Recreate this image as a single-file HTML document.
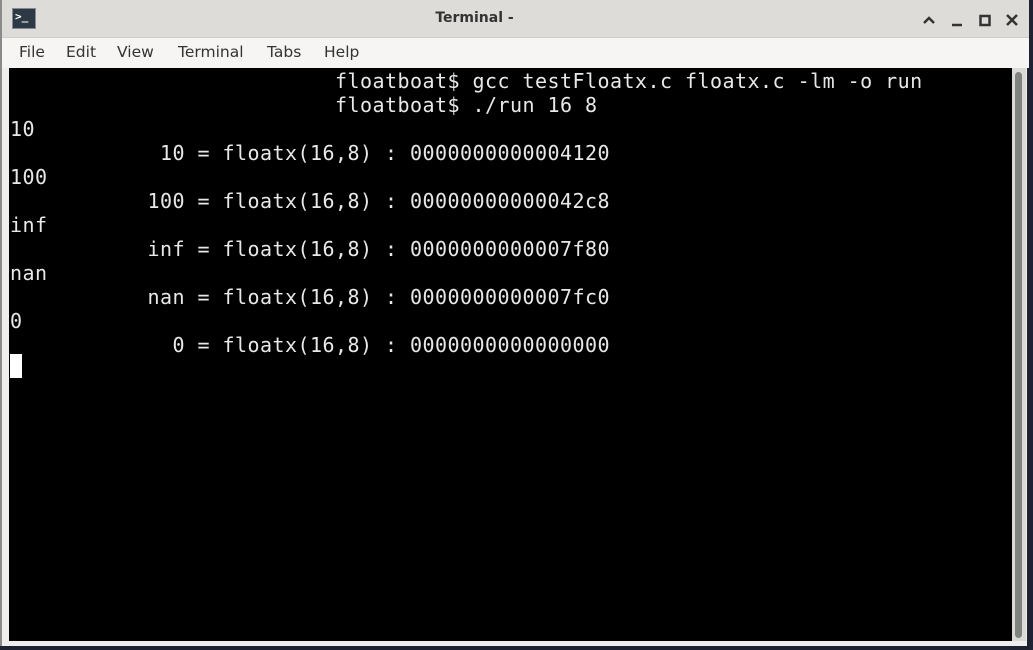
<!DOCTYPE html>
<html><head><style>
body{margin:0;width:1033px;height:650px;background:#1e2233;position:relative;overflow:hidden;font-family:"DejaVu Sans","Liberation Sans",sans-serif}
.win{position:absolute;left:0;top:0;width:1027px;height:646px;background:#efeeec;border-left:2px solid #8a8a8a;box-sizing:border-box}
.title{position:absolute;left:0;top:0;width:1027px;height:37px;background:#dedcd8;border-bottom:1px solid #cfcdc9}
.title .t{position:absolute;left:0;width:945px;top:10px;text-align:center;font-size:14px;font-weight:bold;color:#333}
.icon{position:absolute;left:10px;top:8px;width:24px;height:21px;background:#2d3a45;border:1px solid #889;box-sizing:border-box;color:#fff;font:bold 11px "DejaVu Sans Mono",monospace;line-height:16px;padding-left:2px}
.menu{position:absolute;left:0;top:38px;width:1027px;height:30px;background:#f6f5f4}
.menu span{position:absolute;top:5px;font-size:15.5px;color:#333}
.term{position:absolute;left:9px;top:68px;width:1003px;height:573px;background:#000}
.sb{position:absolute;left:1012px;top:68px;width:14px;height:573px;background:#dcdad6}
.thumb{position:absolute;left:3px;top:4px;width:7px;height:566px;background:#7f8480;border-radius:4px}
pre{position:absolute;left:10px;top:69px;margin:0;font:20px "DejaVu Sans Mono",monospace;letter-spacing:0.46px;line-height:24px;color:#e8e8e8}
.cur{position:absolute;left:10px;top:354px;width:12px;height:24px;background:#fff}
</style></head><body>
<div class="win">
<div class="title"><div class="icon">&gt;_</div><div class="t">Terminal -</div>
<svg style="position:absolute;left:920px;top:12px" width="100" height="16">
<path d="M2 11 L7 6 L12 11" stroke="#333" stroke-width="2.5" fill="none"/>
<path d="M30 13 H40" stroke="#333" stroke-width="2.5"/>
<rect x="58.5" y="4" width="9" height="9" stroke="#333" stroke-width="2.5" fill="none"/>
<path d="M85 3 L95 13 M95 3 L85 13" stroke="#333" stroke-width="2.5"/>
</svg></div>
<div class="menu"><span style="left:17px">File</span><span style="left:64px">Edit</span><span style="left:115px">View</span><span style="left:176px">Terminal</span><span style="left:265px">Tabs</span><span style="left:322px">Help</span></div>
</div>
<div class="term"></div>
<div class="sb"><div class="thumb"></div></div>
<pre>                          floatboat$ gcc testFloatx.c floatx.c -lm -o run
                          floatboat$ ./run 16 8
10
            10 = floatx(16,8) : 0000000000004120
100
           100 = floatx(16,8) : 00000000000042c8
inf
           inf = floatx(16,8) : 0000000000007f80
nan
           nan = floatx(16,8) : 0000000000007fc0
0
             0 = floatx(16,8) : 0000000000000000</pre>
<div class="cur"></div>
</body></html>
